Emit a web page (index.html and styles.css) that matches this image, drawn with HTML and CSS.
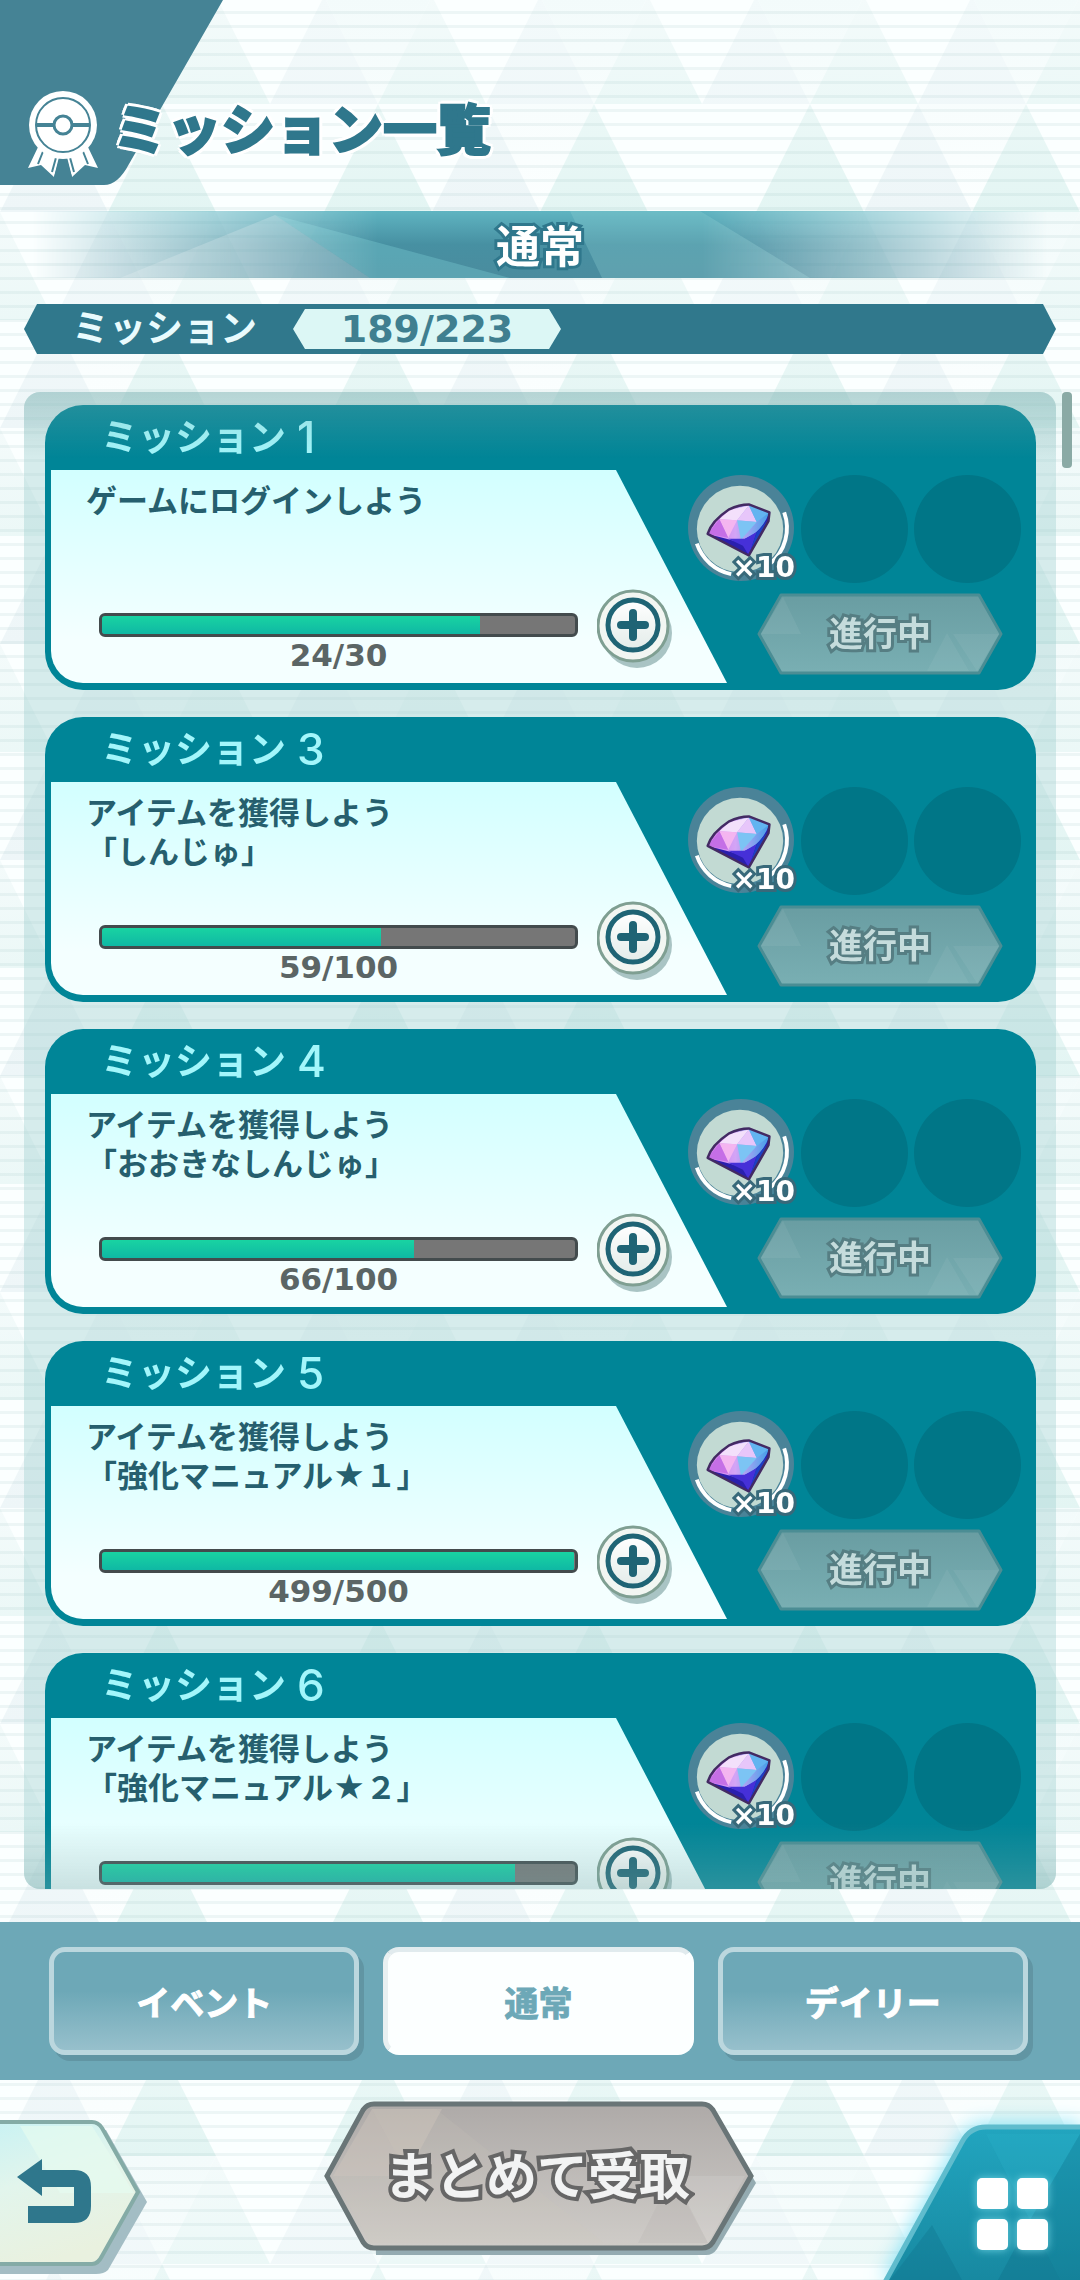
FILE: index.html
```html
<!DOCTYPE html>
<html lang="ja">
<head>
    <meta charset="UTF-8">
    <meta name="viewport" content="width=device-width, initial-scale=1.0">
    <title>ミッション一覧</title>
    <link rel="stylesheet" href="styles.css">
</head>
<body>
    <!-- Shared shapes -->
    <svg class="defs" aria-hidden="true">
        <defs>
            <linearGradient id="tri" x1="0" y1="0" x2="0" y2="1">
                <stop offset="0" stop-color="#f4fbfb"/>
                <stop offset="1" stop-color="#e3f5f3"/>
            </linearGradient>
            <linearGradient id="triPale" x1="0" y1="0" x2="0" y2="1">
                <stop offset="0" stop-color="#f3fafb"/>
                <stop offset="1" stop-color="#eef6f8"/>
            </linearGradient>
            <linearGradient id="triDown" x1="0" y1="0" x2="0" y2="1">
                <stop offset="0" stop-color="#f3fbfb"/>
                <stop offset="1" stop-color="#fcffff"/>
            </linearGradient>
            <linearGradient id="gemTop" x1="0" y1="0" x2="1" y2="0">
                <stop offset="0" stop-color="#d77bea"/>
                <stop offset="0.45" stop-color="#d3a4f6"/>
                <stop offset="1" stop-color="#3fa0e8"/>
            </linearGradient>
            <linearGradient id="stateFill" x1="0" y1="0" x2="0" y2="1">
                <stop offset="0" stop-color="#699da2"/>
                <stop offset="1" stop-color="#79afb3"/>
            </linearGradient>
            <linearGradient id="claimFill" x1="0" y1="0" x2="0" y2="1">
                <stop offset="0" stop-color="#aeaaa8"/>
                <stop offset="1" stop-color="#cfccc8"/>
            </linearGradient>
            <linearGradient id="backFill" x1="0" y1="0" x2="0.3" y2="1">
                <stop offset="0" stop-color="#c9f2f3"/>
                <stop offset="0.45" stop-color="#e2f5ec"/>
                <stop offset="1" stop-color="#e9f1df"/>
            </linearGradient>
            <linearGradient id="menuFill" x1="0" y1="0" x2="0" y2="1">
                <stop offset="0" stop-color="#22a5bf"/>
                <stop offset="1" stop-color="#1788a0"/>
            </linearGradient>
            <linearGradient id="plusFill" x1="0" y1="0" x2="0" y2="1">
                <stop offset="0" stop-color="#ffffff"/>
                <stop offset="1" stop-color="#e3ece9"/>
            </linearGradient>
            <pattern id="triangles" width="432" height="216" patternUnits="userSpaceOnUse" y="-4">
                <rect width="432" height="216" fill="#fbffff"/>
                <path d="M108 0h108l-54 108z M324 0h108l-54 108z M54 108h108l-54 108z" fill="url(#triDown)"/>
                <path d="M0 0l54 108H-54z M432 0l54 108H378z M216 0l54 108H162z M162 108l54 108H108z M378 108l54 108H324z" fill="url(#tri)"/>
                <path d="M108 0l54 108H54z M324 0l54 108H270z M54 108l54 108H0z" fill="url(#triPale)"/>
            </pattern>
            <pattern id="lines" width="14" height="14" patternUnits="userSpaceOnUse">
                <rect y="11" width="14" height="3" fill="#8fb4b4" opacity="0.12"/>
            </pattern>
        </defs>

        <symbol id="gem" viewBox="0 0 108 108">
            <circle cx="54" cy="54" r="54" fill="#4a8398"/>
            <circle cx="53" cy="55" r="44" fill="#c2dad3"/>
            <path d="M9 70A47 47 0 0 0 44 101M84 90A47 47 0 0 0 98 38" fill="none" stroke="#fff" stroke-width="4"/>
            <path d="M20 60L31 43L42 35L62 30L83 38L82 47L62 82Z" fill="#2a1fae"/>
            <path d="M20 60L31 43L42 35L62 30L83 38Q72 66 47 67Z" fill="url(#gemTop)"/>
            <path d="M32 45L50 46L62 31L42 36Z" fill="#f3e0fb"/>
            <path d="M32 45L50 46L41 64Z" fill="#f4b5f0"/>
            <path d="M50 46L62 31L70 48Z" fill="#e7c6fa"/>
            <path d="M62 31L83 38L70 48Z" fill="#62b4f0"/>
            <path d="M50 46L70 48L54 66Z" fill="#7cc4f4"/>
            <path d="M20 60L32 45L41 64Z" fill="#c56fe6"/>
            <path d="M41 65L56 72L62 82L70 58L58 65Z" fill="#4630d8"/>
            <path d="M70 58L82 45L62 82Z" fill="#1d3fc4"/>
            <path d="M20 60Q24 47 42 35Q52 30 62 30L83 38L82 47L62 82Z" fill="none" stroke="#432a63" stroke-width="2.500" stroke-linejoin="round"/>
        </symbol>

        <symbol id="plus" viewBox="0 0 76 84">
            <circle cx="40" cy="44" r="35" fill="#a9c4c4"/>
            <circle cx="36" cy="37" r="35" fill="#f2f6f2" stroke="#7f9f92" stroke-width="3"/>
            <circle cx="36" cy="36" r="25" fill="url(#plusFill)" stroke="#1f6475" stroke-width="5"/>
            <path d="M36 24V48M24 36H48" stroke="#1f6475" stroke-width="8" stroke-linecap="round"/>
        </symbol>

        <symbol id="stateShape" viewBox="0 0 246 82">
            <path d="M24 2H222L244 41L222 80H24L2 41Z" fill="url(#stateFill)" stroke="#4b8d94" stroke-width="3" stroke-linejoin="round"/>
            <path d="M26 4L44 41H4Z" fill="#fff" opacity="0.06"/>
            <path d="M220 78L242 41H196Z" fill="#fff" opacity="0.05"/>
            <path d="M170 78L190 40L212 78Z" fill="#fff" opacity="0.05"/>
        </symbol>
    </svg>

    <svg class="backdrop" aria-hidden="true">
        <rect width="100%" height="100%" fill="url(#triangles)"/>
        <rect width="100%" height="100%" fill="url(#lines)"/>
    </svg>

    <div class="page">
        <header class="page-header">
            <svg class="header-shape" viewBox="0 0 224 185" aria-hidden="true">
                <path d="M0 0H223L129 164Q118 185 104 185H0Z" fill="#458395"/>
            </svg>
            <svg class="badge" viewBox="0 0 70 86" aria-hidden="true">
                <path d="M11 54L0 77L13 74L26 86L32 62L38 62L44 86L57 74L70 77L59 54Z" fill="#fff"/>
                <path d="M16 58L10 73M29 63L24 81M41 63L46 81M54 58L60 73" stroke="#458395" stroke-width="2" fill="none"/>
                <path d="M33 62L26 86H44L37 62Z" fill="#458395"/>
                <circle cx="35" cy="34" r="34" fill="#fff"/>
                <circle cx="35" cy="34" r="27" fill="#fff" stroke="#458395" stroke-width="2"/>
                <path d="M8 34H62" stroke="#458395" stroke-width="4"/>
                <circle cx="35" cy="34" r="9" fill="#fff" stroke="#458395" stroke-width="3"/>
            </svg>
            <h1>ミッション一覧</h1>
        </header>

        <div class="banner">
            <svg class="banner-rays" viewBox="0 0 1080 67" preserveAspectRatio="none" aria-hidden="true">
                <path d="M275 4L510 67H370Z" fill="#7fd0d8" opacity="0.35"/>
                <path d="M570 0H700L810 67H602Z" fill="#8fd0d4" opacity="0.3"/>
                <path d="M275 4L370 67H120Z" fill="#dfe6ea" opacity="0.25"/>
            </svg>
            <span>通常</span>
        </div>

        <div class="summary">
            <span class="summary-label">ミッション</span>
            <span class="summary-count">189/223</span>
        </div>

        <main class="list-wrap">
            <div class="list">
                <section class="card">
                    <h2>ミッション<b>1</b></h2>
                    <div class="card-body">
                        <div class="info">
                            <p>ゲームにログインしよう</p>
                            <div class="progress-row">
                                <div class="progress">
                                    <div class="bar"><div class="fill" style="width: 80%"></div></div>
                                    <span class="count">24/30</span>
                                </div>
                                <button class="plus" type="button" aria-label="詳細"><svg><use href="#plus"/></svg></button>
                            </div>
                        </div>
                        <div class="side">
                            <div class="rewards">
                                <div class="reward"><svg><use href="#gem"/></svg><span>×10</span></div>
                                <div class="slot"></div>
                                <div class="slot"></div>
                            </div>
                            <button class="state" type="button" disabled><svg><use href="#stateShape"/></svg><span>進行中</span></button>
                        </div>
                    </div>
                </section>

                <section class="card">
                    <h2>ミッション<b>3</b></h2>
                    <div class="card-body">
                        <div class="info">
                            <p>アイテムを獲得しよう<br>「しんじゅ」</p>
                            <div class="progress-row">
                                <div class="progress">
                                    <div class="bar"><div class="fill" style="width: 59%"></div></div>
                                    <span class="count">59/100</span>
                                </div>
                                <button class="plus" type="button" aria-label="詳細"><svg><use href="#plus"/></svg></button>
                            </div>
                        </div>
                        <div class="side">
                            <div class="rewards">
                                <div class="reward"><svg><use href="#gem"/></svg><span>×10</span></div>
                                <div class="slot"></div>
                                <div class="slot"></div>
                            </div>
                            <button class="state" type="button" disabled><svg><use href="#stateShape"/></svg><span>進行中</span></button>
                        </div>
                    </div>
                </section>

                <section class="card">
                    <h2>ミッション<b>4</b></h2>
                    <div class="card-body">
                        <div class="info">
                            <p>アイテムを獲得しよう<br>「おおきなしんじゅ」</p>
                            <div class="progress-row">
                                <div class="progress">
                                    <div class="bar"><div class="fill" style="width: 66%"></div></div>
                                    <span class="count">66/100</span>
                                </div>
                                <button class="plus" type="button" aria-label="詳細"><svg><use href="#plus"/></svg></button>
                            </div>
                        </div>
                        <div class="side">
                            <div class="rewards">
                                <div class="reward"><svg><use href="#gem"/></svg><span>×10</span></div>
                                <div class="slot"></div>
                                <div class="slot"></div>
                            </div>
                            <button class="state" type="button" disabled><svg><use href="#stateShape"/></svg><span>進行中</span></button>
                        </div>
                    </div>
                </section>

                <section class="card">
                    <h2>ミッション<b>5</b></h2>
                    <div class="card-body">
                        <div class="info">
                            <p>アイテムを獲得しよう<br>「強化マニュアル★１」</p>
                            <div class="progress-row">
                                <div class="progress">
                                    <div class="bar"><div class="fill" style="width: 99.8%"></div></div>
                                    <span class="count">499/500</span>
                                </div>
                                <button class="plus" type="button" aria-label="詳細"><svg><use href="#plus"/></svg></button>
                            </div>
                        </div>
                        <div class="side">
                            <div class="rewards">
                                <div class="reward"><svg><use href="#gem"/></svg><span>×10</span></div>
                                <div class="slot"></div>
                                <div class="slot"></div>
                            </div>
                            <button class="state" type="button" disabled><svg><use href="#stateShape"/></svg><span>進行中</span></button>
                        </div>
                    </div>
                </section>

                <section class="card">
                    <h2>ミッション<b>6</b></h2>
                    <div class="card-body">
                        <div class="info">
                            <p>アイテムを獲得しよう<br>「強化マニュアル★２」</p>
                            <div class="progress-row">
                                <div class="progress">
                                    <div class="bar"><div class="fill" style="width: 87.4%"></div></div>
                                </div>
                                <button class="plus" type="button" aria-label="詳細"><svg><use href="#plus"/></svg></button>
                            </div>
                        </div>
                        <div class="side">
                            <div class="rewards">
                                <div class="reward"><svg><use href="#gem"/></svg><span>×10</span></div>
                                <div class="slot"></div>
                                <div class="slot"></div>
                            </div>
                            <button class="state" type="button" disabled><svg><use href="#stateShape"/></svg><span>進行中</span></button>
                        </div>
                    </div>
                </section>
            </div>
            <div class="scroll-thumb"></div>
        </main>

        <nav class="tabs">
            <button class="tab" type="button">イベント</button>
            <button class="tab active" type="button">通常</button>
            <button class="tab" type="button">デイリー</button>
        </nav>

        <footer class="footer">
            <button class="back" type="button" aria-label="戻る">
                <svg viewBox="0 0 150 156" aria-hidden="true">
                    <path d="M-4 10H106L147 82L108 150Q104 154 96 154H-4Z" fill="#a3bdc4"/>
                    <path d="M-4 2H92Q98 2 102 8L138 72L102 136Q98 144 92 144H-4Z" fill="url(#backFill)" stroke="#84aba6" stroke-width="4"/>
                    <path d="M20 6H92L134 73H60Z" fill="#e6fbf0" opacity="0.7"/>
                    <path d="M17 57L42 39V50H74Q91 50 91 67V86Q91 103 74 103H28V86H74V67H42V76Z" fill="#2f778c"/>
                </svg>
            </button>
            <button class="claim" type="button" disabled>
                <svg viewBox="0 0 436 158" aria-hidden="true">
                    <path d="M48 8H382Q388 8 393 16L432 82L393 148Q389 154 382 154H52Z" fill="#94abb1"/>
                    <path d="M50 3H378Q385 3 389 9L427 75L389 141Q385 147 378 147H50Q43 147 39 141L3 75L39 9Q43 3 50 3Z" fill="url(#claimFill)" stroke="#697577" stroke-width="5"/>
                    <path d="M48 8H118L82 75H9Z" fill="#d2c8bd" opacity="0.4"/>
                    <path d="M48 8L84 75H9L46 142H280L112 8Z" fill="#d2c8bd" opacity="0.15"/>
                    <path d="M421 75H350L384 142Z" fill="#fff" opacity="0.1"/>
                    <path d="M314 142L348 75L384 142Z" fill="#a5a29e" opacity="0.15"/>
                </svg>
                <span>まとめて受取</span>
            </button>
            <button class="menu" type="button" aria-label="メニュー">
                <svg viewBox="0 0 200 160" aria-hidden="true">
                    <path d="M4 164L82 22Q90 7 106 7H206V164Z" fill="url(#menuFill)" stroke="#5fbccd" stroke-width="5"/>
                    <path d="M106 14L150 100L200 14Z" fill="#2db4cb" opacity="0.25"/>
                    <path d="M52 105L82 160H10Z" fill="#0d6e88" opacity="0.3"/>
                    <path d="M150 100L200 14V160H180Z" fill="#0d6e88" opacity="0.25"/>
                    <path d="M118 160L150 100L180 160Z" fill="#0d6e88" opacity="0.35"/>
                    <g class="menu-squares" fill="#fff">
                        <rect x="97" y="58" width="31" height="31" rx="5"/>
                        <rect x="137" y="58" width="31" height="31" rx="5"/>
                        <rect x="97" y="99" width="31" height="31" rx="5"/>
                        <rect x="137" y="99" width="31" height="31" rx="5"/>
                    </g>
                </svg>
            </button>
        </footer>
    </div>
</body>
</html>
```
FILE: styles.css
```css
* {
    margin: 0;
    padding: 0;
    box-sizing: border-box;
}

body {
    font-family: Inter, "Noto Sans CJK JP", sans-serif;
    font-weight: 700;
    background: #fbffff;
    color: #2f778c;
}

button {
    font: inherit;
    border: none;
    background: none;
    cursor: pointer;
}

button:disabled {
    cursor: default;
}

.defs {
    position: absolute;
    width: 0;
    height: 0;
}

.backdrop {
    position: fixed;
    inset: 0;
    width: 100%;
    height: 100%;
    z-index: -1;
}

.page {
    height: 100vh;
    display: flex;
    flex-direction: column;
    overflow: hidden;
}

/* Header */
.page-header {
    position: relative;
    display: flex;
    align-items: flex-start;
    gap: 15px;
    padding: 91px 28px 8px;
}

.header-shape {
    position: absolute;
    left: 0;
    top: 0;
    width: 224px;
    height: 185px;
}

.badge {
    position: relative;
    width: 70px;
    height: 86px;
}

.page-header h1 {
    position: relative;
    font-size: 54px;
    font-weight: 900;
    line-height: 80px;
    -webkit-text-stroke: 2px #2f778c;
    text-shadow: 4px 0 #fff, -4px 0 #fff, 0 4px #fff, 0 -4px #fff,
        3px 3px #fff, -3px 3px #fff, 3px -3px #fff, -3px -3px #fff;
}

.banner {
    position: relative;
    display: flex;
    justify-content: center;
    margin-top: 26px;
    padding-top: 6px;
    background: linear-gradient(#5fb4c1, #4790a2 50%, #4a8c9e);
    -webkit-mask-image: linear-gradient(90deg, transparent 3%, #000 35%, #000 65%, transparent 97%);
    mask-image: linear-gradient(90deg, transparent 3%, #000 35%, #000 65%, transparent 97%);
}

.banner-rays {
    position: absolute;
    inset: 0;
    width: 100%;
    height: 100%;
}

.banner span {
    position: relative;
    font-size: 44px;
    line-height: 61px;
    color: #fff;
    -webkit-text-stroke: 6px #2f778c;
    paint-order: stroke fill;
}

.summary {
    display: flex;
    align-items: center;
    margin: 26px 24px 0;
    padding: 5px 0 5px 48px;
    background: #30788c;
    clip-path: polygon(0 50%, 13px 0, calc(100% - 13px) 0, 100% 50%, calc(100% - 13px) 100%, 13px 100%);
}

.summary-label {
    width: 221px;
    font-size: 37px;
    line-height: 40px;
    color: #e9fbfd;
}

.summary-count {
    width: 268px;
    font-family: "DejaVu Sans", sans-serif;
    font-size: 38px;
    line-height: 40px;
    text-align: center;
    color: #3f7f90;
    background: #dcf7f5;
    clip-path: polygon(0 50%, 12px 0, calc(100% - 12px) 0, 100% 50%, calc(100% - 12px) 100%, 12px 100%);
}

/* Mission list */
.list-wrap {
    position: relative;
    flex: 1;
    min-height: 0;
    margin: 38px 24px 33px;
}

.list {
    height: 100%;
    padding: 13px 20px 13px 21px;
    display: flex;
    flex-direction: column;
    gap: 27px;
    overflow-y: auto;
    scrollbar-width: none;
    background: rgba(160, 208, 208, 0.4);
    border-radius: 16px;
}

/* fades at both ends of the scroll area */
.list-wrap::before,
.list-wrap::after {
    content: "";
    position: absolute;
    left: 0;
    right: 0;
    height: 66px;
    pointer-events: none;
    z-index: 1;
}

.list-wrap::before {
    top: 0;
    border-radius: 16px 16px 0 0;
    background: linear-gradient(rgba(120, 170, 170, 0.35), rgba(120, 170, 170, 0));
}

.list-wrap::after {
    bottom: 0;
    border-radius: 0 0 16px 16px;
    background: linear-gradient(rgba(120, 170, 170, 0), rgba(120, 170, 170, 0.35));
}

.scroll-thumb {
    position: absolute;
    top: 0;
    right: -16px;
    width: 10px;
    height: 76px;
    border-radius: 4px;
    background: #8aaaa5;
}

.card {
    flex: none;
    padding: 0 15px 7px 6px;
    background: #008597;
    border-radius: 38px;
}

.card h2 {
    display: flex;
    align-items: center;
    gap: 11px;
    height: 65px;
    padding-left: 50px;
    font-size: 37px;
    line-height: 61px;
    color: #a3f6fb;
}

.card h2 b {
    font-size: 44px;
    font-weight: 500;
}

.card-body {
    display: flex;
}

.info {
    flex: 1;
    display: flex;
    flex-direction: column;
    justify-content: space-between;
    min-height: 213px;
    margin-right: -39px;
    padding: 11px 54px 10px 35px;
    background: linear-gradient(#d2ffff, #f4ffff 80%);
    border-radius: 0 0 0 32px;
    clip-path: polygon(0 0, calc(100% - 111px) 0, 100% 100%, 0 100%);
}

.info p {
    font-size: 31px;
    line-height: 39px;
    color: #265f6e;
}

.progress-row {
    display: flex;
    align-items: flex-start;
    gap: 19px;
    height: 84px;
    padding-left: 13px;
}

.progress {
    flex: 1;
    padding-top: 24px;
    text-align: center;
}

.bar {
    height: 24px;
    border: 3px solid #434b4d;
    border-radius: 6px;
    background: #767676;
    overflow: hidden;
}

.fill {
    height: 100%;
    background: linear-gradient(#19d3a2, #0fb8a4);
}

.count {
    display: block;
    font-family: "DejaVu Sans", sans-serif;
    font-size: 31px;
    line-height: 36px;
    color: #5b6565;
}

.plus {
    width: 76px;
    height: 84px;
}

.plus svg {
    display: block;
    width: 76px;
    height: 84px;
}

.side {
    position: relative;
    display: flex;
    flex-direction: column;
    gap: 10px;
    padding-top: 5px;
}

.rewards {
    display: flex;
    gap: 6px;
}

.reward,
.slot {
    position: relative;
    width: 107px;
    height: 108px;
    border-radius: 50%;
}

.slot {
    background: #007687;
}

.reward svg {
    display: block;
    width: 106px;
    height: 106px;
}

.reward span {
    position: absolute;
    right: 0;
    bottom: 0;
    font-family: "DejaVu Sans", sans-serif;
    font-size: 28px;
    line-height: 30px;
    color: #fff;
    -webkit-text-stroke: 6px #38697a;
    paint-order: stroke fill;
}

.state {
    position: relative;
    align-self: flex-end;
    width: 246px;
    height: 82px;
    margin-right: 18px;
    font-size: 34px;
    line-height: 82px;
    color: #c5dcdc;
}

.state svg,
.claim svg {
    position: absolute;
    left: 0;
    top: 0;
    width: 100%;
    height: 100%;
}

.state span {
    position: relative;
    -webkit-text-stroke: 6px #567e83;
    paint-order: stroke fill;
}

/* Tabs */
.tabs {
    display: flex;
    gap: 24px;
    padding: 25px 52px 25px 49px;
    background: #6da8b7;
}

.tab {
    flex: 1;
    height: 108px;
    font-size: 34px;
    color: #fff;
    background: linear-gradient(#6da8b7 40%, #97c0cc);
    border: 5px solid #bbd7de;
    border-radius: 16px;
    box-shadow: 5px 6px 0 #6195a3;
    -webkit-text-stroke: 1px currentColor;
}

.tab.active {
    color: #6da8b7;
    background: #fcffff;
    border-color: #e1ebee #fcffff #fcffff #e8f0f1;
    box-shadow: none;
}

/* Footer */
.footer {
    display: flex;
    justify-content: space-between;
    align-items: flex-end;
    height: 200px;
}

.back {
    width: 204px;
    height: 164px;
}

.back svg {
    display: block;
    width: 150px;
    height: 156px;
}

.claim {
    position: relative;
    width: 436px;
    height: 158px;
    margin-bottom: 21px;
    padding: 0 10px 6px 0;
    font-size: 51px;
    line-height: 148px;
    color: #f2f3f3;
}

.claim span {
    position: relative;
    -webkit-text-stroke: 8px #666;
    paint-order: stroke fill;
}

.menu {
    width: 200px;
    height: 160px;
    filter: drop-shadow(0 0 10px #7fe0f5);
}

.menu svg {
    display: block;
    width: 200px;
    height: 160px;
}

.menu-squares {
    filter: drop-shadow(0 0 4px #6cd0e0);
}
```
